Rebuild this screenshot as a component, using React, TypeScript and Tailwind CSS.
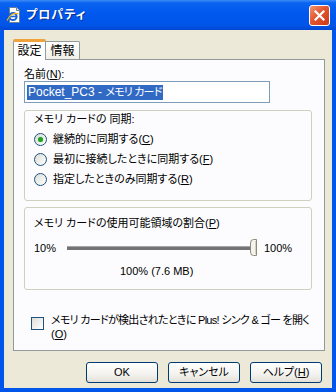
import React from 'react';

const TitleIcon = () => (
    <svg width="16" height="16" viewBox="0 0 16 16">
        <path d="M3.5 0.5h7l3 3v12h-10z" fill="#ffffff" stroke="#6f7f92" />
        <path d="M10.5 0.5v3h3" fill="#dfe6ee" stroke="#6f7f92" />
        <circle cx="7" cy="9.5" r="3.6" fill="none" stroke="#1a64d6" strokeWidth="2" />
        <path d="M3.6 9.5h7" stroke="#1a64d6" strokeWidth="1.6" />
        <path d="M1 13.5c2.5-6 8-8.5 11.5-6.5" fill="none" stroke="#f2b418" strokeWidth="1.2" />
    </svg>
);

const Radio = ({ checked }: { checked?: boolean }) => (
    <span className="w-[13px] h-[13px] rounded-full border border-[#1C5180] bg-[linear-gradient(135deg,#DCDCD7,#FFFFFF)] flex items-center justify-center shrink-0">
        {checked && <span className="w-[5px] h-[5px] rounded-full bg-[#21A121] shadow-[0_0_1px_#5FD35F]" />}
    </span>
);

const SliderThumb = () => (
    <svg width="7" height="17" viewBox="0 0 7 17">
        <path d="M6.5 0.5H3.5Q0.5 0.5 0.5 4V13Q0.5 16.5 3.5 16.5H6.5Z" fill="#F4F3EE" stroke="#8E8A78" />
        <path d="M5.5 2V15" stroke="#D6D2C2" />
    </svg>
);

const XpButton = ({ children }: { children: React.ReactNode }) => (
    <button className="w-[72px] h-[21px] rounded-[3px] border border-[#003C74] bg-[linear-gradient(to_bottom,#FFFFFF,#F3F2EE_60%,#E3E0D6)] text-[11px] leading-none text-black flex items-center justify-center">
        {children}
    </button>
);

export default function App() {
    return (
        <div className="w-[336px] h-[392px] flex flex-col bg-[#0055EA] font-['Liberation_Sans','Noto_Sans_CJK_JP',sans-serif] [font-feature-settings:'palt'] text-black">
            {/* Title bar */}
            <div className="h-[30px] shrink-0 flex items-center pl-[6px] pr-[6px] bg-[linear-gradient(to_bottom,#3C8CF8_0%,#0A63F0_10%,#0058EE_45%,#0054E8_85%,#0046D0_100%)]">
                <TitleIcon />
                <span className="ml-[4px] text-[12px] font-bold text-white tracking-[1px] [text-shadow:1px_1px_0_#0A2F8E]">プロパティ</span>
                <div className="ml-auto w-[21px] h-[21px] rounded-[3px] border border-white bg-[linear-gradient(135deg,#F29474,#E2542E_45%,#CC3A1A)] flex items-center justify-center">
                    <svg width="11" height="11" viewBox="0 0 11 11">
                        <path d="M1.5 1.5L9.5 9.5M9.5 1.5L1.5 9.5" stroke="#ffffff" strokeWidth="2.2" strokeLinecap="square" />
                    </svg>
                </div>
            </div>

            {/* Client area */}
            <div className="flex-1 mx-[4px] mb-[4px] bg-[#ECE9D8] flex flex-col pt-[9px] pl-[9px] pr-[7px]">
                {/* Tabs */}
                <div className="flex items-end h-[20px] relative z-10">
                    <div className="w-[33px] h-[21px] -mb-px bg-white border-x border-[#919B9C] border-t-[3px] border-t-[#F2A23A] rounded-t-[2px] flex items-center justify-center text-[12px]">
                        設定
                    </div>
                    <div className="w-[34px] h-[18px] bg-[linear-gradient(to_bottom,#FFFFFF,#F1EFE6)] border-t border-r border-[#919B9C] rounded-tr-[2px] flex items-center justify-center text-[12px]">
                        情報
                    </div>
                </div>

                {/* Panel */}
                <div className="h-[292px] shrink-0 border border-[#919B9C] bg-[#FCFCFE] pt-[7px] pl-[10px] pr-[12px] flex flex-col text-[11px]">
                    <div className="h-[14px] leading-[14px]">名前(<u>N</u>):</div>
                    <div className="w-[246px] h-[22px] border border-[#7F9DB9] bg-white flex items-center pl-[2px]">
                        <span className="bg-[#316AC5] text-white text-[12px] leading-[15px] px-px whitespace-nowrap">
                            Pocket_PC3 - <span className="text-[11px] tracking-[-0.8px]">メモリ カード</span>
                        </span>
                    </div>

                    {/* Sync group */}
                    <div className="mt-[7px] h-[91px] border border-[#D0D0BF] rounded-[3px] pt-px pl-[9px] flex flex-col">
                        <div className="h-[14px] leading-[14px]">メモリ カードの 同期:</div>
                        <div className="mt-[3px] flex flex-col">
                            <label className="h-[20px] flex items-center gap-[6px]">
                                <Radio checked />
                                <span>継続的に同期する(<u>C</u>)</span>
                            </label>
                            <label className="h-[20px] flex items-center gap-[6px]">
                                <Radio />
                                <span>最初に接続したときに同期する(<u>F</u>)</span>
                            </label>
                            <label className="h-[20px] flex items-center gap-[6px]">
                                <Radio />
                                <span>指定したときのみ同期する(<u>R</u>)</span>
                            </label>
                        </div>
                    </div>

                    {/* Space group */}
                    <div className="mt-[6px] h-[83px] border border-[#D0D0BF] rounded-[3px] pt-[8px] pl-[9px] flex flex-col">
                        <div className="h-[14px] leading-[14px]">メモリ カードの使用可能領域の割合(<u>P</u>)</div>
                        <div className="mt-[8px] h-[20px] flex items-center">
                            <span className="w-[33px]">10%</span>
                            <div className="relative w-[190px] h-[20px] flex items-center">
                                <div className="w-[184px] h-[4px] bg-[#737373] border-t border-[#A5A5A5]" />
                                <div className="absolute left-[183px] top-[1px]">
                                    <SliderThumb />
                                </div>
                            </div>
                            <span className="ml-[7px]">100%</span>
                        </div>
                        <div className="mt-[6px] h-[14px] leading-[14px] pl-[86px]">100% (7.6 MB)</div>
                    </div>

                    {/* Checkbox */}
                    <div className="mt-[23px] ml-[7px] flex items-start gap-[7px]">
                        <span className="mt-[4px] w-[13px] h-[13px] border border-[#1C5180] bg-[linear-gradient(135deg,#DCDCD7,#FFFFFF)] shrink-0" />
                        <div className="leading-[14px]">
                            <div className="whitespace-nowrap tracking-[-0.7px]">メモリ カードが検出されたときに Plus! シンク &amp; ゴー を開く</div>
                            <div>(<u>O</u>)</div>
                        </div>
                    </div>
                </div>

                {/* Buttons */}
                <div className="mt-[11px] mr-[3px] flex justify-end gap-[10px]">
                    <XpButton>OK</XpButton>
                    <XpButton>キャンセル</XpButton>
                    <XpButton>ヘルプ(<u>H</u>)</XpButton>
                </div>
            </div>
        </div>
    );
}
